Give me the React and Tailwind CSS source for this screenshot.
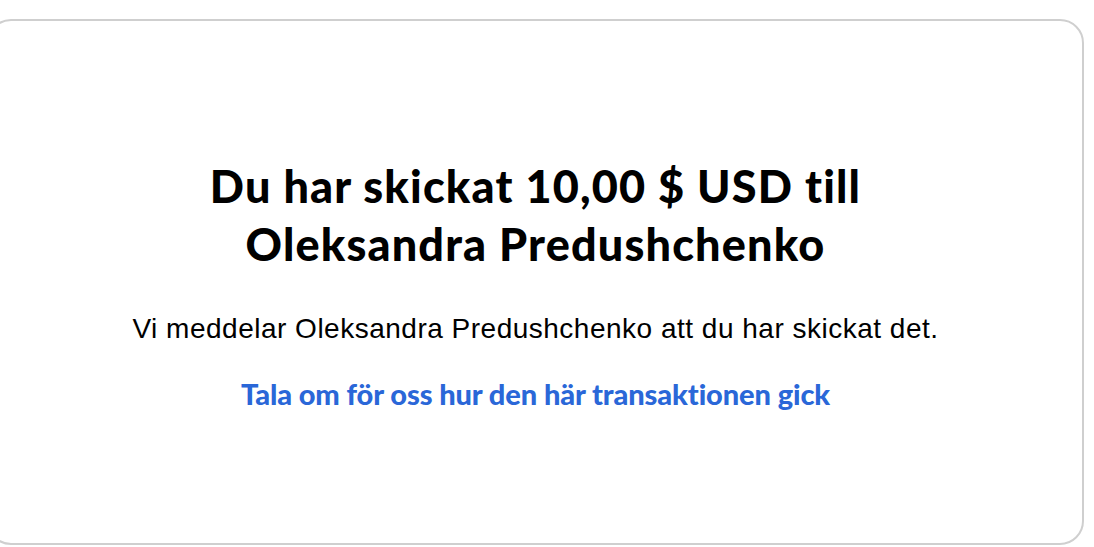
import React from 'react';

const SentConfirmation = ({ amount, recipient }) => {
  return (
    <div className="ml-[-13px] flex h-[526px] w-[1097px] flex-col items-center justify-center rounded-[24px] border-2 border-[#cfcfcf] bg-white pt-[4px] text-center">
      <h1 className="max-w-[720px] font-['Lato',sans-serif] text-[45px] leading-[58px] font-black tracking-[1.15px] text-black">
        Du har skickat {amount} till {recipient}
      </h1>
      <p className="mt-[39px] font-['Liberation_Sans',Arial,sans-serif] text-[28px] leading-[34px] tracking-[0.5px] text-black">
        Vi meddelar {recipient} att du har skickat det.
      </p>
      <a
        href="#"
        className="mt-[31px] font-['Lato',sans-serif] text-[29px] leading-[34px] font-black tracking-[-0.1px] text-[#2a67d8]"
      >
        Tala om för oss hur den här transaktionen gick
      </a>
    </div>
  );
};

export default function App() {
  return (
    <div className="h-[547px] w-full overflow-hidden bg-white pt-[19px]">
      <SentConfirmation amount="10,00 $ USD" recipient="Oleksandra Predushchenko" />
    </div>
  );
}
